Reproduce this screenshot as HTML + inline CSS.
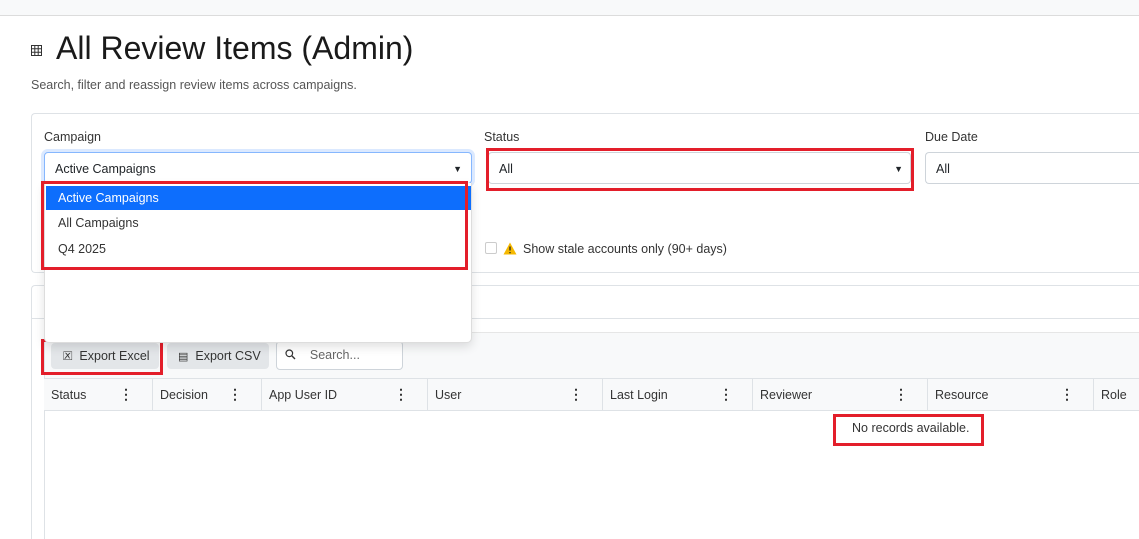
<!DOCTYPE html>
<html><head><meta charset="utf-8"><style>
*{box-sizing:border-box;margin:0;padding:0}
html,body{width:1139px;height:539px;overflow:hidden}
body{background:#fff;font-family:"Liberation Sans",sans-serif;color:#212529;position:relative}
.a{position:absolute}
.lbl{font-size:12.5px;color:#333}
.sel{border:1px solid #ced4da;border-radius:4px;background:#fff;font-size:12.5px;padding-left:10px;line-height:32px}
.red{border:3px solid #e31e2a}
.btn{background:#e3e6e9;border-radius:4px;font-size:12.5px;color:#333;line-height:26px}
.th{position:absolute;top:378px;height:33px;border-right:1px solid #dee2e6;font-size:12.5px;color:#333;line-height:34px;padding-left:7px}
.k{position:absolute;right:19px;top:-1px;font-weight:bold;font-size:14px}
</style></head><body>
<div class="a" style="left:0;top:0;width:1139px;height:16px;background:#f8f9fa;border-bottom:1px solid #dcdcdc"></div>
<svg class="a" style="left:31px;top:45px" width="11" height="11" viewBox="0 0 11 11"><rect x="0.5" y="0.5" width="10" height="10" fill="none" stroke="#333"/><path d="M3.8 0v11M7.2 0v11M0 3.8h11M0 7.2h11" stroke="#333"/></svg>
<div class="a" style="left:56px;top:30px;font-size:32px;color:#1a1a1a">All Review Items (Admin)</div>
<div class="a" style="left:31px;top:78px;font-size:12.5px;color:#555">Search, filter and reassign review items across campaigns.</div>

<div class="a" style="left:31px;top:113px;width:1108px;height:160px;border:1px solid #dee2e6;border-right:none;border-radius:4px 0 0 4px"></div>
<div class="a lbl" style="left:44px;top:130px">Campaign</div>
<div class="a sel" style="left:44px;top:152px;width:428px;height:32px;border-color:#86b7fe;box-shadow:0 0 0 3px rgba(13,110,253,.15)">Active Campaigns<span class="a" style="right:9px;top:0;font-size:9px">▼</span></div>
<div class="a lbl" style="left:484px;top:130px">Status</div>
<div class="a sel" style="left:488px;top:152px;width:423px;height:32px">All<span class="a" style="right:7px;top:0;font-size:9px">▼</span></div>
<div class="a red" style="left:486px;top:148px;width:428px;height:43px"></div>
<div class="a lbl" style="left:925px;top:130px">Due Date</div>
<div class="a sel" style="left:925px;top:152px;width:214px;height:32px;border-right:none;border-radius:4px 0 0 4px">All</div>
<div class="a" style="left:485px;top:242px;width:12px;height:12px;border:1px solid #ccc;border-radius:2px"></div>
<svg class="a" style="left:503px;top:242px" width="14" height="13" viewBox="0 0 14 13"><path d="M7 0.5L13.5 12.5H0.5Z" fill="#f5b800"/><path d="M7 4.5v4M7 10v1.3" stroke="#222" stroke-width="1.3"/></svg>
<div class="a" style="left:523px;top:242px;font-size:12.5px;color:#333">Show stale accounts only (90+ days)</div>

<div class="a" style="left:31px;top:285px;width:1108px;height:254px;border:1px solid #dee2e6;border-right:none;border-bottom:none;border-radius:4px 0 0 0"></div>
<div class="a" style="left:32px;top:318px;width:1107px;border-top:1px solid #dee2e6"></div>
<div class="a" style="left:44px;top:332px;width:1095px;height:46px;background:#f8f9fa;border-top:1px solid #e6e6e6;border-left:1px solid #dee2e6"></div>
<div class="a" style="left:44px;top:378px;width:1095px;height:161px;border-left:1px solid #dee2e6"></div>
<div class="a btn" style="left:51px;top:343px;width:108px;height:26px;padding-left:12px">🗵&nbsp; Export Excel</div>
<div class="a red" style="left:41px;top:339px;width:122px;height:36px"></div>
<div class="a btn" style="left:167px;top:343px;width:102px;height:26px;padding-left:11px"><span style="font-size:11px">▤</span>&nbsp; Export CSV</div>
<div class="a" style="left:276px;top:341px;width:127px;height:29px;border:1px solid #ced4da;border-radius:4px;background:#fff;font-size:12.5px;color:#666;line-height:27px;padding-left:8px"><svg width="11" height="11" viewBox="0 0 11 11" style="vertical-align:-1px"><circle cx="4.3" cy="4.3" r="3.3" fill="none" stroke="#333" stroke-width="1.2"/><path d="M6.8 6.8L10 10" stroke="#333" stroke-width="1.4"/></svg>&nbsp;&nbsp;&nbsp; Search...</div>

<div class="a" style="left:44px;top:378px;width:1095px;height:33px;background:#f8f9fa;border-top:1px solid #dee2e6;border-bottom:1px solid #dee2e6"></div>
<div class="th" style="left:44px;width:109px">Status<span class="k">⋮</span></div>
<div class="th" style="left:153px;width:109px">Decision<span class="k">⋮</span></div>
<div class="th" style="left:262px;width:166px">App User ID<span class="k">⋮</span></div>
<div class="th" style="left:428px;width:175px">User<span class="k">⋮</span></div>
<div class="th" style="left:603px;width:150px">Last Login<span class="k">⋮</span></div>
<div class="th" style="left:753px;width:175px">Reviewer<span class="k">⋮</span></div>
<div class="th" style="left:928px;width:166px">Resource<span class="k">⋮</span></div>
<div class="th" style="left:1094px;width:45px;border-right:none">Role</div>
<div class="a" style="left:852px;top:421px;font-size:12.5px;color:#333">No records available.</div>
<div class="a red" style="left:833px;top:414px;width:151px;height:32px"></div>

<div class="a" style="left:44px;top:183px;width:428px;height:160px;background:#fff;border:1px solid #ddd;border-top:none;border-radius:0 0 5px 5px;box-shadow:0 4px 10px rgba(0,0,0,.12)"></div>
<div class="a" style="left:46px;top:186px;width:425px;height:24px;background:#0d6efd;color:#fff;font-size:12.5px;line-height:24px;padding-left:12px">Active Campaigns</div>
<div class="a" style="left:58px;top:216px;font-size:12.5px;color:#333">All Campaigns</div>
<div class="a" style="left:58px;top:242px;font-size:12.5px;color:#333">Q4 2025</div>
<div class="a red" style="left:41px;top:181px;width:427px;height:89px"></div>
</body></html>
